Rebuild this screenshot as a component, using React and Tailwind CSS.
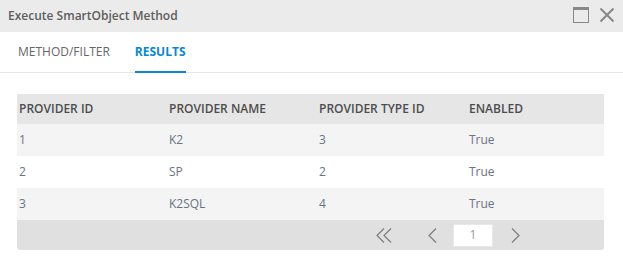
import { useState } from "react";

const rows = [
  { id: "1", name: "K2", type: "3", enabled: "True" },
  { id: "2", name: "SP", type: "2", enabled: "True" },
  { id: "3", name: "K2SQL", type: "4", enabled: "True" },
];

const cols = ["PROVIDER ID", "PROVIDER NAME", "PROVIDER TYPE ID", "ENABLED"];

function App() {

  const [tab, setTab] = useState("results");

  return (
    <div className="w-[623px] h-[259px] bg-white overflow-hidden font-['Open_Sans',sans-serif] text-[12px]">

      {/* title bar */}
      <div className="h-8 bg-[#ebebeb] flex items-center pl-2 pr-2">
        <span className="font-semibold text-[#5e5e5e] text-[12px]">
          Execute SmartObject Method
        </span>
        <div className="ml-auto flex items-center gap-[10px] mt-[-3px]">
          <svg width="16" height="16" viewBox="0 0 16 16">
            <rect x="0.5" y="0.5" width="15" height="15" fill="none" stroke="#888" strokeWidth="1" />
            <rect x="0" y="0" width="16" height="3" fill="#888" />
          </svg>
          <svg width="16" height="16" viewBox="0 0 16 16">
            <path d="M1.5 1.5 L14.5 14.5 M14.5 1.5 L1.5 14.5" stroke="#888" strokeWidth="2" />
          </svg>
        </div>
      </div>

      {/* tabs */}
      <div className="h-[41px] border-b border-[#e5e5e5] flex items-stretch pl-[18px] gap-[25px]">
        <button
          onClick={() => setTab("method")}
          className={
            tab === "method"
              ? "flex items-center border-b-2 border-[#0a87d0] -mb-px text-[#0a87d0] font-bold"
              : "flex items-center text-[#666]"
          }
        >
          METHOD/FILTER
        </button>
        <button
          onClick={() => setTab("results")}
          className={
            tab === "results"
              ? "flex items-center border-b-2 border-[#0a87d0] -mb-px text-[#0a87d0] font-bold"
              : "flex items-center text-[#666]"
          }
        >
          RESULTS
        </button>
      </div>

      {/* grid */}
      <div className="mx-[17px] mt-[21px] w-[587px] rounded-b-[3px] overflow-hidden">

        <div className="h-[30px] bg-[#e6e6e6] grid grid-cols-[150px_150px_150px_1fr] items-center">
          {cols.map((c) => (
            <div key={c} className="pl-[2px] font-semibold text-[#4d4d4d]">
              {c}
            </div>
          ))}
        </div>

        {rows.map((r, i) => (
          <div
            key={r.id}
            className={
              i % 2 === 0
                ? "h-8 bg-[#f4f4f4] grid grid-cols-[150px_150px_150px_1fr] items-center text-[#6b7383]"
                : "h-8 bg-white grid grid-cols-[150px_150px_150px_1fr] items-center text-[#6b7383]"
            }
          >
            <div className="pl-[2px]">{r.id}</div>
            <div className="pl-[2px]">{r.name}</div>
            <div className="pl-[2px]">{r.type}</div>
            <div className="pl-[2px]">{r.enabled}</div>
          </div>
        ))}

        {/* pager */}
        <div className="h-[30px] bg-[#e0e0e0] flex items-center pl-[359px]">
          <svg width="17" height="15" viewBox="0 0 17 15">
            <path d="M8 0.5 L1 7.5 L8 14.5 M15 0.5 L8 7.5 L15 14.5" fill="none" stroke="#7d7d7d" strokeWidth="1.2" />
          </svg>
          <svg width="9" height="15" viewBox="0 0 9 15" className="ml-[35px]">
            <path d="M8 0.5 L1 7.5 L8 14.5" fill="none" stroke="#7d7d7d" strokeWidth="1.2" />
          </svg>
          <div className="ml-[16px] w-10 h-[23px] bg-white border border-[#e8e8e8] flex items-center justify-center text-[#999] text-[12px]">
            1
          </div>
          <svg width="9" height="15" viewBox="0 0 9 15" className="ml-[18px]">
            <path d="M1 0.5 L8 7.5 L1 14.5" fill="none" stroke="#7d7d7d" strokeWidth="1.2" />
          </svg>
        </div>

      </div>

    </div>
  );
}

export default App;
